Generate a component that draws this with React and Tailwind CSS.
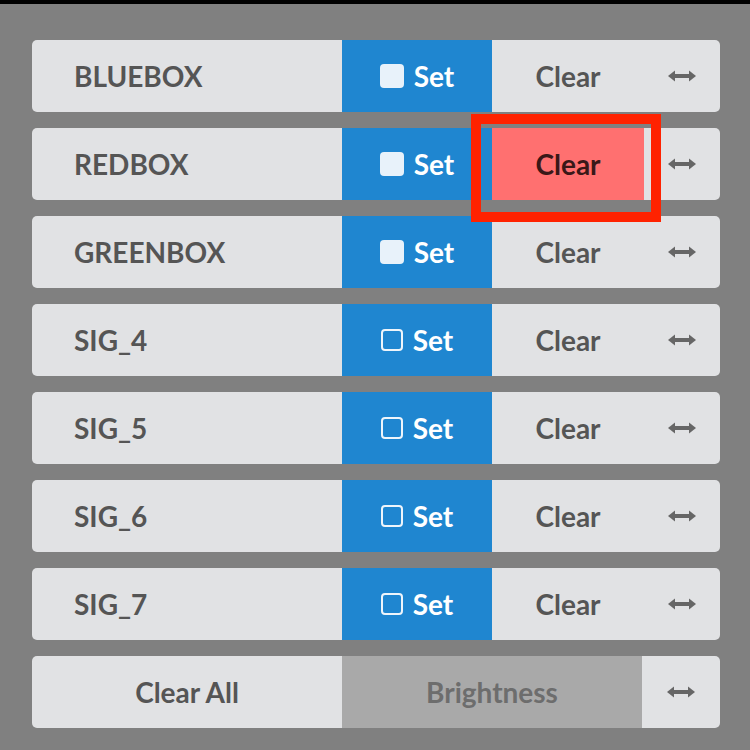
import React from 'react'

const rows = [
  { name: 'BLUEBOX', on: true },
  { name: 'REDBOX', on: true, hot: true },
  { name: 'GREENBOX', on: true },
  { name: 'SIG_4' },
  { name: 'SIG_5' },
  { name: 'SIG_6' },
  { name: 'SIG_7' },
]

function Arrows() {
  return (
    <svg width="28" height="12" viewBox="0 0 28 12" className="text-[#666]">
      <rect x="5" y="4" width="18" height="4" fill="currentColor" />
      <path d="M0 6 L7 0.5 L7 11.5 Z" fill="currentColor" />
      <path d="M28 6 L21 0.5 L21 11.5 Z" fill="currentColor" />
    </svg>
  )
}

function Row({ name, on, hot }) {
  return (
    <div className="flex h-[72px] rounded-[5px] bg-[#e1e2e4] overflow-hidden">
      <div className="w-[310px] flex items-center pl-[42px] text-[#555]">{name}</div>
      <div className="w-[150px] bg-[#1f86d0] flex items-center justify-center gap-[10px] text-white">
        {on
          ? <span className="w-[24px] h-[24px] rounded-[4px] bg-[#e8f2fa]" />
          : <span className="w-[22px] h-[22px] rounded-[4px] border-2 border-[#eef5fb]" />}
        <span>Set</span>
      </div>
      <div className={`w-[152px] flex items-center justify-center ${hot ? 'bg-[#ff7070] text-[#3a1818]' : 'text-[#555]'}`}>
        Clear
      </div>
      <div className="flex-1 flex items-center justify-center">
        <Arrows />
      </div>
    </div>
  )
}

export default function App() {
  return (
    <div className="w-[750px] h-[750px] bg-[#808080] border-t-4 border-black relative font-['Lato','Liberation_Sans',sans-serif] font-bold text-[28px]">
      <div className="flex flex-col gap-4 pt-9 pl-[32px] pr-[30px]">
        {rows.map(r => <Row key={r.name} {...r} />)}
        <div className="flex h-[72px] rounded-[5px] bg-[#e1e2e4] overflow-hidden">
          <div className="w-[310px] flex items-center justify-center text-[#555]">Clear All</div>
          <div className="w-[300px] bg-[#a9a9a9] flex items-center justify-center text-[#6d6d6d]">Brightness</div>
          <div className="flex-1 flex items-center justify-center">
            <Arrows />
          </div>
        </div>
      </div>
      {/* highlight */}
      <div className="absolute left-[471px] top-[110px] w-[190px] h-[108px] border-[10px] border-[#ff2200]" />
    </div>
  )
}
